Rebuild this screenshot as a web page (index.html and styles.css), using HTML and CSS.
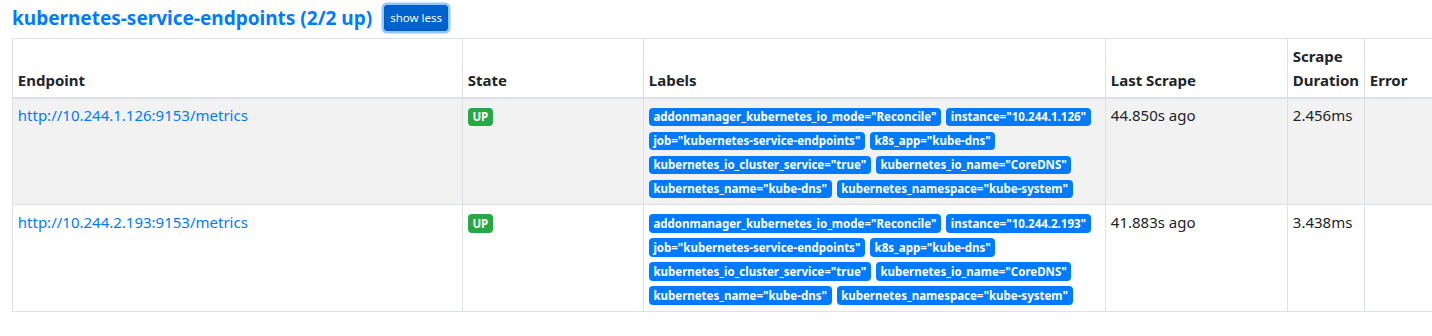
FILE: index.html
```html
<!DOCTYPE html>
<html>
<head>
<meta charset="utf-8">
<link rel="stylesheet" href="styles.css">
</head>
<body>
<div class="page">
  <div class="pool-head">
    <a class="pool-title" href="#">kubernetes-service-endpoints (2/2 up)</a>
    <button class="btn-less">show less</button>
  </div>
  <table class="targets">
    <colgroup>
      <col class="c-endpoint"><col class="c-state"><col class="c-labels"><col class="c-last"><col class="c-dur"><col class="c-err">
    </colgroup>
    <thead>
      <tr>
        <th>Endpoint</th>
        <th>State</th>
        <th>Labels</th>
        <th>Last Scrape</th>
        <th>Scrape Duration</th>
        <th>Error</th>
      </tr>
    </thead>
    <tbody>
      <tr class="odd">
        <td><a class="ep" href="#">http://10.244.1.126:9153/metrics</a></td>
        <td><span class="badge up">UP</span></td>
        <td class="labels"><span class="badge lbl">addonmanager_kubernetes_io_mode="Reconcile"</span><span class="badge lbl">instance="10.244.1.126"</span><span class="badge lbl">job="kubernetes-service-endpoints"</span><span class="badge lbl">k8s_app="kube-dns"</span><span class="badge lbl">kubernetes_io_cluster_service="true"</span><span class="badge lbl">kubernetes_io_name="CoreDNS"</span><span class="badge lbl">kubernetes_name="kube-dns"</span><span class="badge lbl">kubernetes_namespace="kube-system"</span></td>
        <td>44.850s ago</td>
        <td>2.456ms</td>
        <td></td>
      </tr>
      <tr>
        <td><a class="ep" href="#">http://10.244.2.193:9153/metrics</a></td>
        <td><span class="badge up">UP</span></td>
        <td class="labels"><span class="badge lbl">addonmanager_kubernetes_io_mode="Reconcile"</span><span class="badge lbl">instance="10.244.2.193"</span><span class="badge lbl">job="kubernetes-service-endpoints"</span><span class="badge lbl">k8s_app="kube-dns"</span><span class="badge lbl">kubernetes_io_cluster_service="true"</span><span class="badge lbl">kubernetes_io_name="CoreDNS"</span><span class="badge lbl">kubernetes_name="kube-dns"</span><span class="badge lbl">kubernetes_namespace="kube-system"</span></td>
        <td>41.883s ago</td>
        <td>3.438ms</td>
        <td></td>
      </tr>
    </tbody>
  </table>
</div>
</body>
</html>
```
FILE: styles.css
```css
html { overflow: hidden; }
body {
  margin: 0;
  font-family: "Noto Sans", "Open Sans", sans-serif;
  font-size: 15px;
  line-height: 24px;
  color: #212529;
  background: #fff;
}
.page { padding: 0 0 0 12px; width: 1480px; }
.pool-head {
  display: flex;
  align-items: center;
  height: 38px;
}
.pool-title {
  color: #007bff;
  font-weight: 700;
  font-size: 19px;
  text-decoration: none;
  line-height: 1.2;
  margin-top: -2px;
}
.btn-less {
  margin-left: 12px;
  margin-top: -2px;
  font-family: inherit;
  font-size: 11.5px;
  line-height: 1.5;
  color: #fff;
  background: #0062cc;
  border: 1px solid #005cbf;
  border-radius: 3px;
  padding: 3px 5px;
  height: 26px;
  box-shadow: 0 0 0 2.5px rgba(38, 143, 255, 0.5);
}
.targets {
  border-collapse: collapse;
  table-layout: fixed;
  width: 1465px;
  border: 1px solid #dee2e6;
}
.c-endpoint { width: 450px; }
.c-state { width: 181px; }
.c-labels { width: 462px; }
.c-last { width: 182px; }
.c-dur { width: 77px; }
.c-err { width: 113px; }
.targets th, .targets td {
  border: 1px solid #dee2e6;
  padding: 4.8px;
  vertical-align: top;
  text-align: left;
}
.targets th {
  vertical-align: bottom;
  border-bottom: 2px solid #dee2e6;
  font-weight: 700;
}
.targets tbody tr.odd { background: #f2f2f2; }
.ep { color: #007bff; text-decoration: none; }
.badge {
  display: inline-block;
  font-size: 11.5px;
  font-weight: 700;
  line-height: 1;
  padding: 3.5px 4.6px;
  border-radius: 4px;
  color: #fff;
  white-space: nowrap;
  vertical-align: baseline;
}
.up { background: #28a745; }
.lbl { background: #007bff; margin-right: 5px; }
```
